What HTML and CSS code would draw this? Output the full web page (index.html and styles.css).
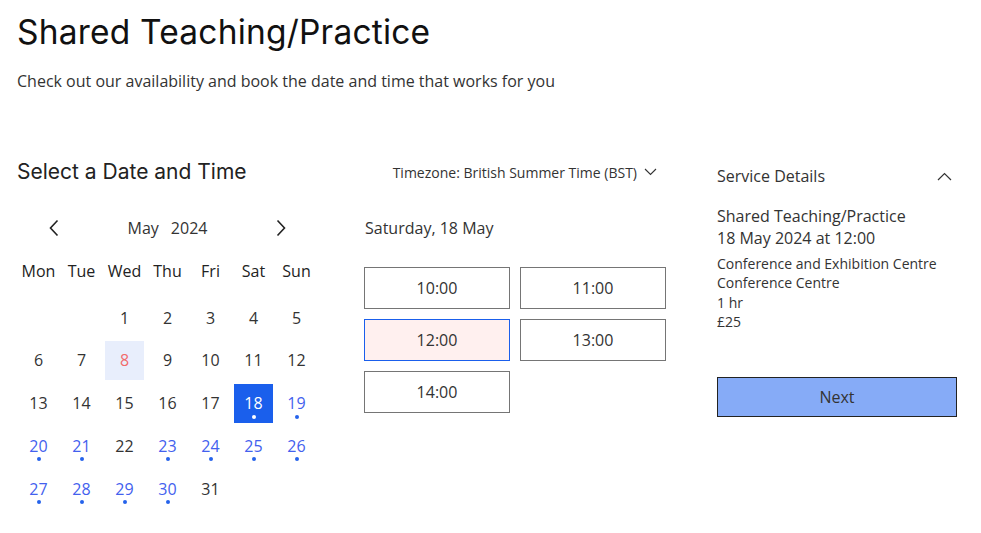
FILE: index.html
```html
<!DOCTYPE html>
<html lang="en">
<head>
<meta charset="utf-8">
<title>Shared Teaching/Practice</title>
<link rel="stylesheet" href="styles.css">
</head>
<body>
<div class="page">
  <h1 class="title">Shared Teaching/Practice</h1>
  <p class="intro">Check out our availability and book the date and time that works for you</p>

  <div class="columns">
    <section class="col-cal">
      <h2 class="section-title">Select a Date and Time</h2>
      <div class="cal-nav">
        <button class="nav-btn" aria-label="Previous month">
          <svg width="10" height="18" viewBox="0 0 10 18"><polyline points="8.5,1.5 1.5,9 8.5,16.5" fill="none" stroke="#222" stroke-width="1.6"/></svg>
        </button>
        <div class="month"><span>May</span><span>2024</span></div>
        <button class="nav-btn" aria-label="Next month">
          <svg width="10" height="18" viewBox="0 0 10 18"><polyline points="1.5,1.5 8.5,9 1.5,16.5" fill="none" stroke="#222" stroke-width="1.6"/></svg>
        </button>
      </div>
      <div class="weekdays">
        <span>Mon</span><span>Tue</span><span>Wed</span><span>Thu</span><span>Fri</span><span>Sat</span><span>Sun</span>
      </div>
      <div class="days">
        <span class="day empty"></span><span class="day empty"></span>
        <span class="day">1</span><span class="day">2</span><span class="day">3</span><span class="day">4</span><span class="day">5</span>
        <span class="day">6</span><span class="day">7</span><span class="day today">8</span><span class="day">9</span><span class="day">10</span><span class="day">11</span><span class="day">12</span>
        <span class="day">13</span><span class="day">14</span><span class="day">15</span><span class="day">16</span><span class="day">17</span><span class="day selected avail">18</span><span class="day avail">19</span>
        <span class="day avail">20</span><span class="day avail">21</span><span class="day">22</span><span class="day avail">23</span><span class="day avail">24</span><span class="day avail">25</span><span class="day avail">26</span>
        <span class="day avail">27</span><span class="day avail">28</span><span class="day avail">29</span><span class="day avail">30</span><span class="day">31</span>
      </div>
    </section>

    <section class="col-times">
      <div class="tz">
        <span>Timezone: British Summer Time (BST)</span>
        <svg width="13" height="8" viewBox="0 0 13 8"><polyline points="1,1 6.5,6.5 12,1" fill="none" stroke="#333" stroke-width="1.1"/></svg>
      </div>
      <div class="day-label">Saturday, 18 May</div>
      <div class="slots">
        <button class="slot">10:00</button>
        <button class="slot">11:00</button>
        <button class="slot active">12:00</button>
        <button class="slot">13:00</button>
        <button class="slot">14:00</button>
      </div>
    </section>

    <aside class="col-details">
      <div class="details-head">
        <span>Service Details</span>
        <svg width="15" height="9" viewBox="0 0 15 9"><polyline points="1,8 7.5,1.5 14,8" fill="none" stroke="#333" stroke-width="1.2"/></svg>
      </div>
      <div class="svc-main">
        <div>Shared Teaching/Practice</div>
        <div>18 May 2024 at 12:00</div>
      </div>
      <div class="svc-meta">
        <div>Conference and Exhibition Centre</div>
        <div>Conference Centre</div>
        <div>1 hr</div>
        <div>£25</div>
      </div>
      <button class="next">Next</button>
    </aside>
  </div>
</div>
</body>
</html>
```

FILE: styles.css
```css
* { box-sizing: border-box; }
html, body { margin: 0; padding: 0; background: #fff; }
body {
  font-family: "Open Sans", "Noto Sans", sans-serif;
  color: #333;
}
.page { padding: 12px 17px 0 17px; }
.title {
  font-family: Inter, "Noto Sans", sans-serif;
  font-weight: 400;
  font-size: 33.5px;
  line-height: 40px;
  margin: 0;
  color: #111;
  letter-spacing: 0.2px;
}
.intro {
  margin: 18px 0 0 0;
  font-size: 16px;
  line-height: 22px;
  color: #333;
}
.columns {
  display: flex;
  margin-top: 66px;
}
.col-cal { width: 347px; padding-left: 2px; }
.section-title {
  font-family: Inter, "Noto Sans", sans-serif;
  font-weight: 400;
  font-size: 21px;
  line-height: 28px;
  margin: 0 0 0 -2px;
  color: #222;
}
.cal-nav {
  width: 297px;
  display: flex;
  align-items: center;
  justify-content: space-between;
  padding: 0 25px;
  margin-top: 30px;
  height: 24px;
}
.nav-btn {
  width: 20px; height: 24px;
  border: 0; background: none; padding: 0;
  display: flex; align-items: center; justify-content: center;
}
.month { display: flex; gap: 12px; font-size: 16px; color: #333; }
.weekdays {
  width: 297px;
  display: grid;
  grid-template-columns: repeat(7, 39px);
  column-gap: 4px;
  margin-top: 20px;
  font-size: 16px;
  line-height: 22px;
  text-align: center;
  color: #222;
}
.days {
  width: 297px;
  display: grid;
  grid-template-columns: repeat(7, 39px);
  grid-auto-rows: 39px;
  row-gap: 3.75px;
  column-gap: 4px;
  margin-top: 16px;
}
.day {
  position: relative;
  display: flex;
  align-items: center;
  justify-content: center;
  font-size: 16px;
  color: #333;
}
.day.today { background: #e8eefc; color: #f26b6b; }
.day.avail { color: #4361ee; }
.day.avail::after {
  content: "";
  position: absolute;
  left: 50%;
  bottom: 4px;
  width: 4px; height: 4px;
  margin-left: -2px;
  border-radius: 50%;
  background: #2563eb;
}
.day.selected { background: #1a5fec; color: #fff; }
.day.selected::after { background: #fff; }

.col-times { width: 353px; }
.tz {
  display: flex;
  align-items: center;
  justify-content: flex-end;
  gap: 7px;
  padding-right: 60px;
  height: 28px;
  margin-top: 0;
  font-size: 14px;
  color: #333;
}
.day-label {
  margin-top: 31px;
  font-size: 16px;
  line-height: 22px;
  padding-left: 1px;
}
.slots {
  margin-top: 28px;
  display: grid;
  grid-template-columns: repeat(2, 146px);
  grid-auto-rows: 42px;
  gap: 10px;
}
.slot {
  font-family: "Open Sans", "Noto Sans", sans-serif;
  font-size: 16px;
  color: #333;
  background: #fff;
  border: 1px solid #757575;
  padding: 0;
}
.slot.active { background: #fff0ef; border-color: #1a5fec; }

.col-details { width: 240px; }
.details-head {
  display: flex;
  align-items: center;
  justify-content: space-between;
  padding-right: 5px;
  height: 28px;
  margin-top: 4px;
  font-size: 16px;
}
.svc-main {
  margin-top: 15px;
  font-size: 16px;
  line-height: 22px;
}
.svc-meta {
  margin-top: 5px;
  font-size: 14px;
  line-height: 19.3px;
}
.next {
  margin-top: 46px;
  width: 240px;
  height: 40px;
  background: #86abf7;
  border: 1px solid #222;
  font-family: "Open Sans", "Noto Sans", sans-serif;
  font-size: 16px;
  color: #333;
}
```
